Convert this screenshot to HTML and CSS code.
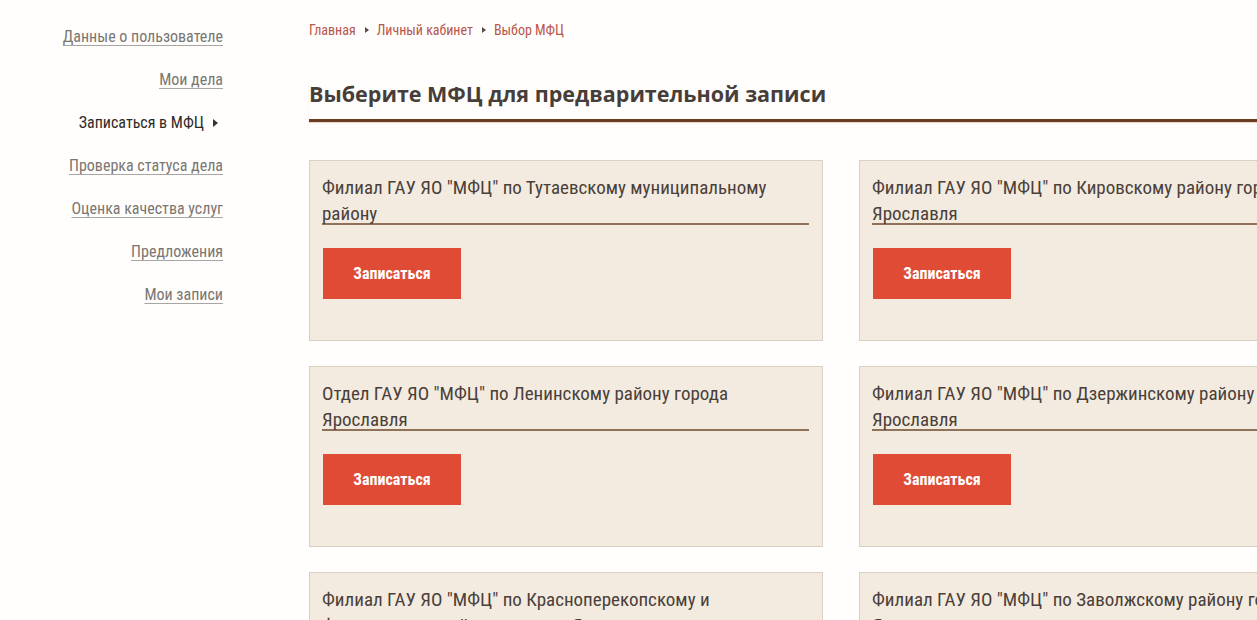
FILE: index.html
```html
<!DOCTYPE html>
<html lang="ru"><head><meta charset="utf-8"><title>Выбор МФЦ</title><link rel="stylesheet" href="styles.css"></head>
<body>
<div class="page">
  <nav class="side">
    <a class="side-link" href="#">Данные о пользователе</a>
    <a class="side-link" href="#">Мои дела</a>
    <span class="side-link active">Записаться в МФЦ <span class="tri"></span></span>
    <a class="side-link" href="#">Проверка статуса дела</a>
    <a class="side-link" href="#">Оценка качества услуг</a>
    <a class="side-link" href="#">Предложения</a>
    <a class="side-link" href="#">Мои записи</a>
  </nav>
  <main class="main">
    <div class="crumbs">
      <a href="#">Главная</a><span class="sep"></span><a href="#">Личный кабинет</a><span class="sep"></span><span class="cur">Выбор МФЦ</span>
    </div>
    <h1 class="title">Выберите МФЦ для предварительной записи</h1>
    <div class="grid">
      <div class="card"><div class="card-title"><span>Филиал ГАУ ЯО "МФЦ" по Тутаевскому муниципальному району</span></div><a class="btn" href="#">Записаться</a></div>
      <div class="card"><div class="card-title"><span>Филиал ГАУ ЯО "МФЦ" по Кировскому району города Ярославля</span></div><a class="btn" href="#">Записаться</a></div>
      <div class="card"><div class="card-title"><span>Отдел ГАУ ЯО "МФЦ" по Ленинскому району города Ярославля</span></div><a class="btn" href="#">Записаться</a></div>
      <div class="card"><div class="card-title"><span>Филиал ГАУ ЯО "МФЦ" по Дзержинскому району города Ярославля</span></div><a class="btn" href="#">Записаться</a></div>
      <div class="card"><div class="card-title"><span>Филиал ГАУ ЯО "МФЦ" по Красноперекопскому и Фрунзенскому районам города Ярославля</span></div><a class="btn" href="#">Записаться</a></div>
      <div class="card"><div class="card-title"><span>Филиал ГАУ ЯО "МФЦ" по Заволжскому району города Ярославля</span></div><a class="btn" href="#">Записаться</a></div>
    </div>
  </main>
</div>
</body></html>
```
FILE: styles.css
```css
html,body{margin:0;padding:0;background:#fffefc;overflow:hidden;}
body{font-family:Roboto,"Open Sans",sans-serif;font-stretch:75%;color:#4a3f3a;}
.page{display:flex;width:1400px;}
.side{width:223px;flex:none;display:flex;flex-direction:column;align-items:flex-end;padding-top:26px;gap:21px;}
.side-link{font-size:16px;line-height:22px;color:#7a7672;text-decoration:underline;text-decoration-color:#a9a5a0;text-underline-offset:3px;white-space:nowrap;}
.side-link.active{color:#2f2a27;text-decoration:none;display:flex;align-items:center;}
.tri{display:inline-block;width:0;height:0;border-top:4px solid transparent;border-bottom:4px solid transparent;border-left:5px solid #3a3330;margin-left:9px;margin-right:5px;}
.main{margin-left:86px;flex:1;}
.crumbs{padding-top:20px;font-size:14px;line-height:20px;display:flex;align-items:center;}
.crumbs a,.crumbs .cur{color:#b8564b;text-decoration:none;}
.sep{display:inline-block;width:0;height:0;border-top:3px solid transparent;border-bottom:3px solid transparent;border-left:4px solid #5a4a42;margin:0 8px 0 9px;}
.title{margin:0;margin-top:41px;font-family:"Open Sans",sans-serif;font-size:21.5px;font-stretch:100%;font-weight:700;line-height:26px;color:#473d39;padding-bottom:12px;border-bottom:3px solid #6a3d22;box-shadow:0 1px 1px rgba(200,150,110,.35);width:1100px;}
.grid{display:grid;grid-template-columns:514px 514px;column-gap:36px;row-gap:25px;margin-top:38px;}
.card{background:#f3ebdf;border:1px solid #d9cfc2;padding:14px 13px 41px 12px;height:181px;box-sizing:border-box;}
.card-title{font-size:19px;line-height:26px;color:#4a3f3a;border-bottom:2px solid #8f7258;}
.card-title span{display:block;margin-bottom:-4px;}
.btn{display:flex;align-items:center;justify-content:center;width:138px;height:51px;margin:23px 0 0 1px;background:#e04b36;color:#fff;font-size:16px;font-weight:700;text-decoration:none;}
```
